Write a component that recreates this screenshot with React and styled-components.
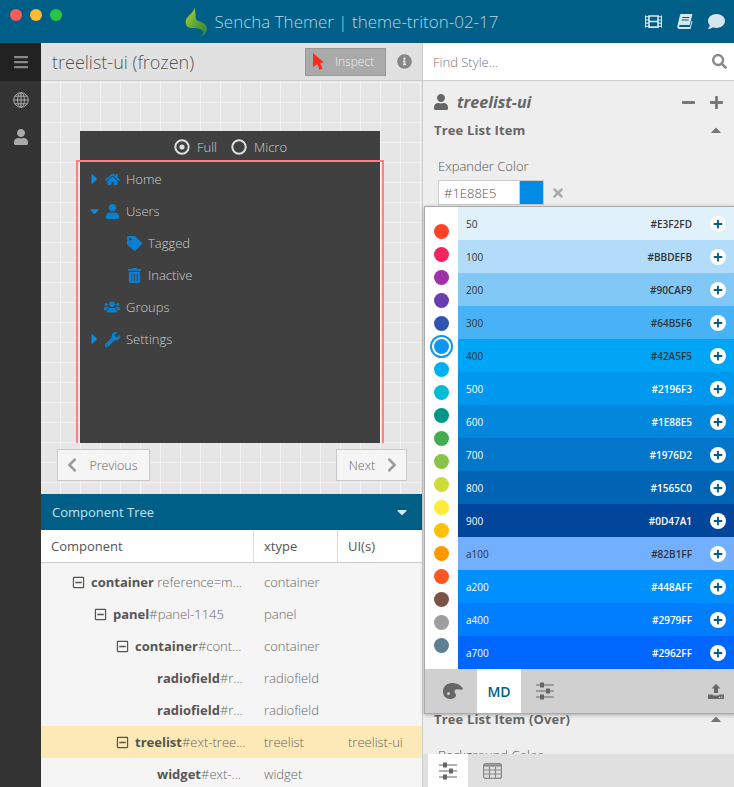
import React from 'react'
import styled, { createGlobalStyle } from 'styled-components'
import {
  FaBars, FaUser, FaInfoCircle, FaSearch, FaMinus, FaPlus, FaTimes, FaCaretUp, FaCaretRight,
  FaCaretDown, FaHome, FaTag, FaTrashAlt, FaUsers, FaWrench, FaChevronLeft, FaChevronRight,
  FaFilm, FaComment, FaRegMinusSquare,
} from 'react-icons/fa'

const Global = createGlobalStyle`
  html, body { margin: 0; padding: 0; height: 100%; overflow: hidden; }
  body { font-family: "Open Sans", "Liberation Sans", sans-serif; background: #eee; }
  * { box-sizing: border-box; }
`

const Page = styled.div`
  width: 734px;
  height: 787px;
  display: flex;
  flex-direction: column;
  position: relative;
  overflow: hidden;
`

const TitleBar = styled.header`
  height: 43px;
  flex: none;
  background: #005f86;
  display: flex;
  align-items: center;
  padding: 0 9px 0 10px;
`

const Lights = styled.div`
  display: flex;
  gap: 8px;
  margin-bottom: 13px;
`

const Light = styled.span`
  width: 12px;
  height: 12px;
  border-radius: 50%;
  background: ${p => p.$color};
`

const Brand = styled.div`
  flex: 1;
  display: flex;
  align-items: center;
  justify-content: center;
  gap: 8px;
  margin-right: 24px;
  color: #b5d5e3;
  font-size: 17px;
  font-weight: 300;
  white-space: nowrap;
`

const TitleIcons = styled.div`
  display: flex;
  align-items: center;
  gap: 15px;
  color: #d6e6ee;
  font-size: 17px;
  svg { display: block; }
`

const Body = styled.div`
  flex: 1;
  display: flex;
  min-height: 0;
`

const SideNav = styled.nav`
  width: 41px;
  flex: none;
  background: #333;
  display: flex;
  flex-direction: column;
`

const NavItem = styled.div`
  height: ${p => (p.$top ? '38px' : '37px')};
  display: flex;
  align-items: center;
  justify-content: center;
  background: ${p => (p.$top ? '#222' : 'transparent')};
  color: ${p => (p.$top ? '#888' : '#aaa')};
  font-size: 16px;
`

const Center = styled.main`
  width: 381px;
  flex: none;
  display: flex;
  flex-direction: column;
  min-height: 0;
`

const CenterHead = styled.div`
  height: 38px;
  flex: none;
  background: #e1e1e1;
  border-bottom: 1px solid #ccc;
  display: flex;
  align-items: center;
  padding: 0 10px 0 11px;
`

const ViewTitle = styled.h1`
  flex: 1;
  margin: 0;
  font-size: 18px;
  font-weight: 300;
  color: #555;
`

const InspectButton = styled.button`
  width: 81px;
  height: 28px;
  padding: 0 0 0 7px;
  display: flex;
  align-items: center;
  gap: 10px;
  border: 1px solid #999;
  background: #aaa;
  color: #eee;
  font: 300 12px "Open Sans", sans-serif;
  margin-right: 11px;
`

const InfoIcon = styled(FaInfoCircle)`
  color: #888;
  font-size: 15px;
`

const Canvas = styled.section`
  flex: 1;
  min-height: 0;
  background-color: #e6e6e6;
  background-image:
    linear-gradient(to right, #f3f3f3 1px, transparent 1px),
    linear-gradient(to bottom, #f3f3f3 1px, transparent 1px);
  background-size: 20px 20px;
  background-position: -1px 1px;
  padding: 50px 15px 13px 16px;
  display: flex;
  flex-direction: column;
  gap: 6px;
`

const Device = styled.div`
  width: 300px;
  height: 312px;
  flex: none;
  margin-left: 23px;
  background: #404040;
  display: flex;
  flex-direction: column;
`

const RadioRow = styled.div`
  height: 29px;
  flex: none;
  display: flex;
  align-items: center;
  justify-content: center;
  gap: 14px;
  color: #ccc;
  font-size: 13px;
  font-weight: 300;
  padding: 2px 0 0 1px;
`

const Radio = styled.label`
  display: flex;
  align-items: center;
  gap: 7px;
`

const TreeFrame = styled.div`
  flex: 1;
  margin: 0 -4px;
  border: 2px solid #ff8080;
  border-bottom: 0;
  padding: 1px 2px 0;
`

const TreeItem = styled.div`
  height: 32px;
  display: flex;
  align-items: center;
  color: #ccc;
  font-size: 13px;
  font-weight: 300;
  padding-left: ${p => p.$depth * 22 + 3}px;
`

const Expander = styled.span`
  width: 16px;
  flex: none;
  color: #0a8ce0;
  font-size: 16px;
  display: flex;
  justify-content: center;
  margin-right: 4px;
  padding-left: 7px;
`

const ItemIcon = styled.span`
  width: 18px;
  flex: none;
  color: #0a80d0;
  font-size: ${p => (p.$wide ? '16px' : '15px')};
  display: flex;
  justify-content: center;
  margin-right: 5px;
`

const PagerRow = styled.div`
  display: flex;
  justify-content: space-between;
`

const PagerButton = styled.button`
  height: 32px;
  width: ${p => p.$width}px;
  display: flex;
  align-items: center;
  justify-content: center;
  gap: 9px;
  background: #f5f5f5;
  border: 1px solid #c9c9c9;
  color: #666;
  font: 300 12.5px "Open Sans", sans-serif;
  padding: 0 ${p => p.$right || 0}px 0 ${p => p.$left || 0}px;
  svg { color: #999; font-size: 16px; }
`

const TreePanel = styled.section`
  height: 293px;
  flex: none;
  display: flex;
  flex-direction: column;
  background: #f5f5f5;
  overflow: hidden;
`

const PanelHead = styled.div`
  height: 36px;
  flex: none;
  background: #005f86;
  color: #c8e0ea;
  font-size: 13px;
  display: flex;
  align-items: center;
  justify-content: space-between;
  padding: 0 12px 0 11px;
  svg { font-size: 16px; color: #d6e6ee; }
`

const Grid = styled.div`
  display: grid;
  grid-template-columns: 213px 84px 1fr;
`

const ColHead = styled(Grid)`
  height: 33px;
  flex: none;
  background: #fff;
  border-bottom: 1px solid #ccc;
  margin-bottom: 3px;
`

const ColLabel = styled.div`
  display: flex;
  align-items: center;
  padding: 0 0 1px 10px;
  font-size: 13px;
  color: #555;
  border-right: ${p => (p.$last ? '0' : '1px solid #ddd')};
`

const Row = styled(Grid)`
  height: 32px;
  flex: none;
  align-items: center;
  background: ${p => (p.$selected ? '#fde9b6' : 'transparent')};
  font-size: 13px;
  font-weight: 300;
  color: #666;
`

const NameCell = styled.div`
  display: flex;
  align-items: center;
  padding-left: ${p => p.$indent}px;
  white-space: nowrap;
  overflow: hidden;
  svg { font-size: 13px; color: #555; margin-right: 6px; flex: none; }
  b { font-weight: 700; color: #555; }
`

const Cell = styled.div`
  padding-left: 10px;
`

const RightPanel = styled.aside`
  flex: 1;
  min-width: 0;
  display: flex;
  flex-direction: column;
  border-left: 1px solid #ccc;
  background: #eee;
`

const Search = styled.div`
  height: 38px;
  flex: none;
  background: #fff;
  border-bottom: 1px solid #ccc;
  display: flex;
  align-items: center;
  justify-content: space-between;
  padding: 0 7px 0 10px;
  font-size: 13px;
  font-weight: 300;
  color: #777;
  svg { color: #888; font-size: 15px; }
`

const Styles = styled.div`
  flex: 1;
  min-height: 0;
  overflow: hidden;
  padding: 0 10px 0 11px;
`

const UiHead = styled.div`
  height: 40px;
  padding-top: 2px;
  display: flex;
  align-items: center;
  color: #666;
  font-size: 16px;
  font-weight: 700;
  font-style: italic;
  margin-left: -1px;
`

const UiIcon = styled(FaUser)`
  font-size: 16px;
  margin-right: 8px;
`

const UiActions = styled.div`
  margin-left: auto;
  display: flex;
  gap: 13px;
  font-size: 15px;
  color: #777;
`

const SectionHead = styled.div`
  display: flex;
  justify-content: space-between;
  align-items: center;
  height: 18px;
  font-size: 13px;
  font-weight: 700;
  color: #666;
  letter-spacing: 0.15px;
  svg { color: #777; font-size: 16px; }
`

const FieldLabel = styled.div`
  margin: 18px 0 5px 4px;
  height: 18px;
  line-height: 18px;
  font-size: 13px;
  font-weight: 300;
  color: #555;
`

const ColorField = styled.div`
  display: flex;
  align-items: center;
  margin-left: 4px;
  height: 25px;
  margin-bottom: ${p => p.$gap || 0}px;
`

const ColorInput = styled.div`
  width: 82px;
  height: 25px;
  background: #fff;
  border: 1px solid #ccc;
  display: flex;
  align-items: center;
  padding-left: 5px;
  font-size: 13px;
  font-weight: 300;
  color: #555;
`

const ColorSwatch = styled.div`
  width: 24px;
  height: 25px;
  background: #008be6;
  border: 1px solid #ccc;
  border-left: 0;
`

const ClearIcon = styled(FaTimes)`
  color: #aaa;
  font-size: 14px;
  margin-left: 7px;
`

const TabBar = styled.div`
  height: 33px;
  flex: none;
  background: #e0e0e0;
  display: flex;
  padding-left: 5px;
`

const Tab = styled.div`
  width: 40px;
  display: flex;
  align-items: center;
  justify-content: center;
  background: ${p => (p.$active ? '#fff' : 'transparent')};
  padding-left: ${p => p.$pad || 0}px;
`

const Popup = styled.div`
  position: absolute;
  left: 424px;
  top: 206px;
  width: 312px;
  height: 508px;
  border: 1px solid #aaa;
  background: #fff;
  box-shadow: 0 1px 4px rgba(0, 0, 0, 0.3);
  display: grid;
  grid-template-columns: 33px 1fr;
  grid-template-rows: 462px 1fr;
`

const Dots = styled.div`
  display: flex;
  flex-direction: column;
  align-items: center;
  gap: 8px;
  padding-top: 17px;
`

const Dot = styled.span`
  width: 15px;
  height: 15px;
  flex: none;
  border-radius: 50%;
  background: ${p => p.$color};
  box-shadow: ${p => (p.$active ? `0 0 0 2px #fff, 0 0 0 4px ${p.$color}` : 'none')};
`

const Shades = styled.div`
  display: flex;
  flex-direction: column;
  width: 276px;
`

const Shade = styled.div`
  flex: 1;
  display: flex;
  align-items: center;
  padding: 0 8px;
  background: ${p => p.$bg};
  color: ${p => (p.$light ? '#fff' : '#333')};
  font-size: 10px;
  font-weight: 600;
  span:first-child { flex: 1; font-weight: 400; }
`

const AddButton = styled.span`
  width: 16px;
  height: 16px;
  border-radius: 50%;
  background: #fff;
  color: #005f86;
  font-size: 10px;
  display: flex;
  align-items: center;
  justify-content: center;
  margin-left: 18px;
`

const PopupFoot = styled.div`
  grid-column: 1 / -1;
  background: #d0d0d0;
  display: flex;
  align-items: stretch;
  padding-right: 11px;
`

const FootTab = styled.div`
  width: 44px;
  display: flex;
  align-items: center;
  justify-content: center;
  background: ${p => (p.$active ? '#fff' : 'transparent')};
  color: #005f86;
  font-size: 14px;
  font-weight: 600;
  margin-left: ${p => (p.$first ? '8px' : '0')};
  padding: 0 ${p => p.$right || 0}px 0 ${p => p.$left || 0}px;
`

const FootEnd = styled.div`
  margin-left: auto;
  display: flex;
  align-items: center;
`

const Leaf = () => (
  <svg width="22" height="30" viewBox="0 0 22 30">
    <defs>
      <linearGradient id="leaf" x1="0" y1="0" x2="1" y2="1">
        <stop offset="0" stopColor="#c4d32e" />
        <stop offset="0.5" stopColor="#5fa83a" />
        <stop offset="1" stopColor="#2c7f3c" />
      </linearGradient>
    </defs>
    <path fill="url(#leaf)" d="M9 0C10 4 5 7 2 11-1 15 1 21 6 21c5 0 9 0 12 3 1 1 0 3-3 5 4 0 7-3 7-7 0-5-5-7-9-8C9 13 12 6 9 0Z" />
  </svg>
)

const Cursor = () => (
  <svg width="12" height="17" viewBox="0 0 12 17">
    <path fill="#ff2a1a" d="M0 0 11 9.500 7 10 9.500 15.500 6.500 17 4.500 11 0 14Z" />
  </svg>
)

const Globe = () => (
  <svg width="16" height="16" viewBox="0 0 16 16" fill="none" stroke="#aaa" strokeWidth="1">
    <circle cx="8" cy="8" r="7.300" />
    <ellipse cx="8" cy="8" rx="3.400" ry="7.300" />
    <path d="M8 .7v14.600M.7 8h14.600M1.800 4.200h12.400M1.800 11.800h12.400" />
  </svg>
)

const BookIcon = () => (
  <svg width="16" height="15" viewBox="0 0 16 15" fill="currentColor">
    <path fillRule="evenodd" d="M4 0h11.500l-2.800 11H3a1 1 0 0 0-1 1c0 .6.500 1 1 1h10l1.500-6 1 .5L13.500 15H2.500C1 15 0 13.700.3 12.200L3 1C3.100.4 3.500 0 4 0Zm1.500 3-.3 1h7l.3-1Zm-.7 2.500-.3 1h7l.3-1Z" />
  </svg>
)

const RadioMark = ({ checked }) => (
  <svg width="16" height="16" viewBox="0 0 16 16">
    <circle cx="8" cy="8" r="6.700" fill="none" stroke="#ddd" strokeWidth="2" />
    {checked && <circle cx="8" cy="8" r="2.600" fill="#ddd" />}
  </svg>
)

const Sliders = () => (
  <svg width="18" height="18" viewBox="0 0 18 18" fill="#666">
    <path d="M0 2.500h18v1H0ZM0 8.500h18v1H0ZM0 14.500h18v1H0Z" />
    <rect x="4" y="0.500" width="4" height="5" rx=".5" />
    <rect x="10" y="6.500" width="4" height="5" rx=".5" />
    <rect x="4" y="12.500" width="4" height="5" rx=".5" />
  </svg>
)

const TableIcon = () => (
  <svg width="19" height="16" viewBox="0 0 19 16" fill="none" stroke="#888" strokeWidth="1.200">
    <rect x=".6" y=".6" width="17.800" height="14.800" rx="2" />
    <path strokeWidth="2.200" d="M1 2.500h17" />
    <path d="M1 7h17M1 11h17M6.500 4v11M12.500 4v11" />
  </svg>
)

const PaletteBlob = () => (
  <svg width="20" height="16" viewBox="0 0 20 16" fill="#666">
    <path fillRule="evenodd" d="M9 0c5 0 9 2 11 6-1 1-3 .6-5 .2-2-.3-3.500.5-3.500 2.300 0 1.500 1.500 2 1.500 3.500C13 14.500 10.500 16 7.500 16 3 16 0 13 0 8.500 0 3.500 4 0 9 0Zm-3.500 9a1.500 1.500 0 1 0 0 3 1.500 1.500 0 0 0 0-3Z" />
  </svg>
)

const UploadTray = () => (
  <svg width="16" height="15" viewBox="0 0 16 15" fill="#666">
    <path fillRule="evenodd" d="M8 0l4.500 4.500H10V9H6V4.500H3.500ZM0 10.500h4.500l1 1h5l1-1H16V15H0Zm12 2.200a.7.700 0 1 0 0 1 .7.700 0 0 0 0-1Zm2.200 0a.7.700 0 1 0 0 1 .7.700 0 0 0 0-1Z" />
  </svg>
)

const navTree = [
  { label: 'Home', depth: 0, exp: 'right', icon: <FaHome /> },
  { label: 'Users', depth: 0, exp: 'down', icon: <FaUser /> },
  { label: 'Tagged', depth: 1, icon: <FaTag /> },
  { label: 'Inactive', depth: 1, icon: <FaTrashAlt /> },
  { label: 'Groups', depth: 0, icon: <FaUsers />, wide: true },
  { label: 'Settings', depth: 0, exp: 'right', icon: <FaWrench /> },
]

const rows = [
  { name: 'container', rest: ' reference=m...', xtype: 'container', indent: 31, toggle: true },
  { name: 'panel', rest: '#panel-1145', xtype: 'panel', indent: 53, toggle: true },
  { name: 'container', rest: '#cont...', xtype: 'container', indent: 75, toggle: true },
  { name: 'radiofield', rest: '#r...', xtype: 'radiofield', indent: 116 },
  { name: 'radiofield', rest: '#r...', xtype: 'radiofield', indent: 116 },
  { name: 'treelist', rest: '#ext-tree...', xtype: 'treelist', ui: 'treelist-ui', indent: 75, toggle: true, selected: true },
  { name: 'widget', rest: '#ext-...', xtype: 'widget', indent: 116 },
]

const dots = ['#ff4128', '#f5245f', '#a030a8', '#6a3eb0', '#2f55b0', '#0f96ee', '#00aff0', '#00bcd4', '#009688', '#43ab50', '#8bc34a', '#cddc39', '#ffeb3b', '#ffc107', '#ff9800', '#ff5722', '#795548', '#9e9e9e', '#5d7f94']

const shades = [
  ['50', '#E3F2FD', '#e1f1fc'],
  ['100', '#BBDEFB', '#b2dcf9'],
  ['200', '#90CAF9', '#81c8f6'],
  ['300', '#64B5F6', '#47b3f6'],
  ['400', '#42A5F5', '#00a6f6'],
  ['500', '#2196F3', '#0098ee', true],
  ['600', '#1E88E5', '#0287dc', true],
  ['700', '#1976D2', '#0276c8', true],
  ['800', '#1565C0', '#0163b4', true],
  ['900', '#0D47A1', '#01469b', true],
  ['a100', '#82B1FF', '#72affe'],
  ['a200', '#448AFF', '#0090fe', true],
  ['a400', '#2979FF', '#007efe', true],
  ['a700', '#2962FF', '#0067fe', true],
]

export default function App() {
  return (
    <Page>
      <Global />
      <TitleBar>
        <Lights>
          <Light $color="#fc5b57" />
          <Light $color="#fdbc2e" />
          <Light $color="#27c83f" />
        </Lights>
        <Brand><Leaf />Sencha Themer | theme-triton-02-17</Brand>
        <TitleIcons>
          <FaFilm />
          <BookIcon />
          <FaComment />
        </TitleIcons>
      </TitleBar>
      <Body>
        <SideNav>
          <NavItem $top><FaBars /></NavItem>
          <NavItem><Globe /></NavItem>
          <NavItem><FaUser /></NavItem>
        </SideNav>
        <Center>
          <CenterHead>
            <ViewTitle>treelist-ui (frozen)</ViewTitle>
            <InspectButton><Cursor />Inspect</InspectButton>
            <InfoIcon />
          </CenterHead>
          <Canvas>
            <Device>
              <RadioRow>
                <Radio><RadioMark checked />Full</Radio>
                <Radio><RadioMark />Micro</Radio>
              </RadioRow>
              <TreeFrame>
                {navTree.map(item => (
                  <TreeItem key={item.label} $depth={item.depth}>
                    <Expander>
                      {item.exp === 'right' && <FaCaretRight />}
                      {item.exp === 'down' && <FaCaretDown />}
                    </Expander>
                    <ItemIcon $wide={item.wide}>{item.icon}</ItemIcon>
                    {item.label}
                  </TreeItem>
                ))}
              </TreeFrame>
            </Device>
            <PagerRow>
              <PagerButton $width={93} $right={5}><FaChevronLeft />Previous</PagerButton>
              <PagerButton $width={71} $left={6}>Next<FaChevronRight /></PagerButton>
            </PagerRow>
          </Canvas>
          <TreePanel>
            <PanelHead>Component Tree<FaCaretDown /></PanelHead>
            <ColHead>
              <ColLabel>Component</ColLabel>
              <ColLabel>xtype</ColLabel>
              <ColLabel $last>UI(s)</ColLabel>
            </ColHead>
            {rows.map((row, i) => (
              <Row key={i} $selected={row.selected}>
                <NameCell $indent={row.indent}>
                  {row.toggle && <FaRegMinusSquare />}
                  <span><b>{row.name}</b>{row.rest}</span>
                </NameCell>
                <Cell>{row.xtype}</Cell>
                <Cell>{row.ui}</Cell>
              </Row>
            ))}
          </TreePanel>
        </Center>
        <RightPanel>
          <Search>Find Style...<FaSearch /></Search>
          <Styles>
            <UiHead>
              <UiIcon />treelist-ui
              <UiActions><FaMinus /><FaPlus /></UiActions>
            </UiHead>
            <SectionHead>Tree List Item<FaCaretUp /></SectionHead>
            <FieldLabel>Expander Color</FieldLabel>
            <ColorField $gap={505}>
              <ColorInput>#1E88E5</ColorInput>
              <ColorSwatch />
              <ClearIcon />
            </ColorField>
            <SectionHead>Tree List Item (Over)<FaCaretUp /></SectionHead>
            <FieldLabel>Background Color</FieldLabel>
          </Styles>
          <TabBar>
            <Tab $active><Sliders /></Tab>
            <Tab $pad={9}><TableIcon /></Tab>
          </TabBar>
        </RightPanel>
      </Body>
      <Popup>
        <Dots>
          {dots.map((c, i) => <Dot key={c} $color={c} $active={i === 5} />)}
        </Dots>
        <Shades>
          {shades.map(([name, hex, bg, light]) => (
            <Shade key={name} $bg={bg} $light={light}>
              <span>{name}</span>
              <span>{hex}</span>
              <AddButton><FaPlus /></AddButton>
            </Shade>
          ))}
        </Shades>
        <PopupFoot>
          <FootTab $first $right={4}><PaletteBlob /></FootTab>
          <FootTab $active>MD</FootTab>
          <FootTab $left={4}><Sliders /></FootTab>
          <FootEnd><UploadTray /></FootEnd>
        </PopupFoot>
      </Popup>
    </Page>
  )
}
